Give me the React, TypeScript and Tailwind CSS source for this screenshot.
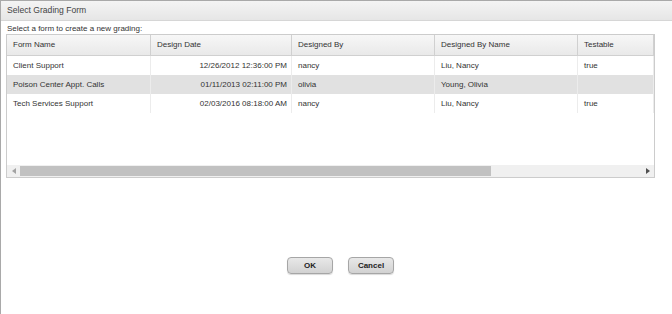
const COLS = [
  { label: "Form Name", w: "w-[144px]" },
  { label: "Design Date", w: "w-[141px]" },
  { label: "Designed By", w: "w-[143px]" },
  { label: "Designed By Name", w: "w-[143px]" },
  { label: "Testable", w: "flex-1" },
];

const ROWS = [
  ["Client Support", "12/26/2012 12:36:00 PM", "nancy", "Liu, Nancy", "true"],
  ["Poison Center Appt. Calls", "01/11/2013 02:11:00 PM", "olivia", "Young, Olivia", ""],
  ["Tech Services Support", "02/03/2016 08:18:00 AM", "nancy", "Liu, Nancy", "true"],
];

const btn =
  "h-[17px] w-[46px] rounded-[4px] border border-[#a6a6a6] bg-gradient-to-b from-[#e8e8e8] to-[#d2d2d2] text-[8px] font-bold text-[#222] shadow-[0_1px_1px_rgba(0,0,0,0.15)]";

export default function App() {
  return (
    <div className="flex h-[314px] w-[672px] flex-col border-l border-t border-[#a9a9a9] bg-white font-[family-name:Liberation_Sans,Arial,sans-serif] text-[#333]">
      <div className="flex h-[20px] shrink-0 items-center border-b border-[#d6d6d6] bg-gradient-to-b from-[#f4f4f4] to-[#e6e6e6] pl-[6px] text-[8.6px] text-[#444]">
        Select Grading Form
      </div>

      <div className="px-[5px] pt-[3px]">
        <p className="h-[10px] pl-[1px] text-[8px] leading-[10px]">
          Select a form to create a new grading:
        </p>

        <div className="flex h-[144px] w-[649px] flex-col border border-[#cccccc]">
          <div className="flex h-[21px] shrink-0 border-b border-[#d0d0d0] bg-gradient-to-b from-[#f7f7f7] to-[#e9e9e9] text-[8px]">
            {COLS.map((c) => (
              <div
                key={c.label}
                className={`${c.w} flex items-center border-r border-[#d0d0d0] pl-[6px]`}
              >
                {c.label}
              </div>
            ))}
          </div>

          {ROWS.map((r, i) => (
            <div
              key={r[0]}
              className={`flex h-[19px] shrink-0 text-[8px] ${i === 1 ? "bg-[#e1e1e1]" : "bg-white"}`}
            >
              {r.map((cell, j) => (
                <div
                  key={j}
                  className={`${COLS[j].w} flex items-center border-r border-[#ececec] ${
                    j === 1 ? "justify-end pr-[4px]" : "pl-[6px]"
                  }`}
                >
                  {cell}
                </div>
              ))}
            </div>
          ))}

          <div className="flex-1" />

          <div className="flex h-[12px] shrink-0 items-center bg-[#f0f0f0]">
            <div className="flex w-[13px] justify-center">
              <svg width="4" height="6" viewBox="0 0 4 6">
                <path d="M4 0 L0 3 L4 6 Z" fill="#a3a3a3" />
              </svg>
            </div>
            <div className="h-[10px] w-[471px] bg-[#c1c1c1]" />
            <div className="flex-1" />
            <div className="flex w-[13px] justify-center">
              <svg width="4" height="6" viewBox="0 0 4 6">
                <path d="M0 0 L4 3 L0 6 Z" fill="#505050" />
              </svg>
            </div>
          </div>
        </div>
      </div>

      <div className="mt-[79px] flex justify-center gap-[15px] pl-[8px]">
        <button className={btn}>OK</button>
        <button className={btn}>Cancel</button>
      </div>
    </div>
  );
}
